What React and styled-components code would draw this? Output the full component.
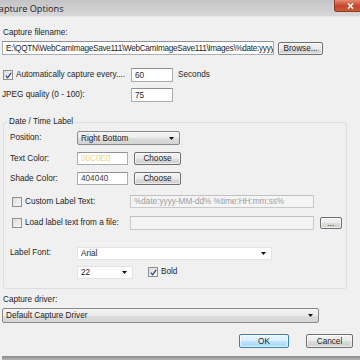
import React from 'react';
import styled, { createGlobalStyle } from 'styled-components';

const Global = createGlobalStyle`
  html, body { margin: 0; padding: 0; background: #f0f0f0; }
  body { font-family: "Liberation Sans", Arial, sans-serif; }
`;

const Window = styled.div`
  width: 360px;
  height: 360px;
  overflow: hidden;
  display: flex;
  flex-direction: column;
  background: #f0f0f0;
  color: #1e1e1e;
  font-size: 8.2px;
`;

const TitleBar = styled.div`
  height: 17px;
  flex: none;
  display: flex;
  justify-content: space-between;
  align-items: flex-start;
  background: linear-gradient(#c4c4c6, #d8d8d9);
  border-bottom: 1px solid #e6e6e6;
  box-sizing: border-box;
`;

const Title = styled.div`
  margin-left: -7px;
  margin-top: 2px;
  font-size: 9.2px;
  color: #222;
  font-family: "Open Sans", "Liberation Sans", sans-serif;
`;

const Close = styled.div`
  width: 26px;
  height: 12px;
  background: linear-gradient(#e48a74, #c84428 55%, #d05a3c);
  border: 1px solid #8c3a2a;
  border-top: none;
  border-right: none;
  border-radius: 0 0 0 3px;
  display: flex;
  align-items: center;
  justify-content: flex-end;
  padding-right: 6px;
  box-sizing: border-box;
`;

const Body = styled.div`
  flex: 1;
  display: flex;
  flex-direction: column;
  padding-left: 2px;
`;

const Label = styled.div`
  height: 10px;
  line-height: 10px;
  margin-top: ${(p) => p.$top || 0}px;
  margin-left: ${(p) => p.$left || 0}px;
  width: ${(p) => (p.$w ? `${p.$w}px` : 'auto')};
  flex: none;
  white-space: nowrap;
`;

const Row = styled.div`
  display: flex;
  align-items: center;
  height: ${(p) => p.$h || 14}px;
  margin-top: ${(p) => p.$top || 0}px;
  flex: none;
`;

const Field = styled.div`
  box-sizing: border-box;
  width: ${(p) => p.$w}px;
  height: ${(p) => p.$h || 14}px;
  margin-left: ${(p) => p.$left || 0}px;
  background: ${(p) => (p.$disabled ? '#f4f4f4' : '#fff')};
  border: 1px solid ${(p) => (p.$disabled ? '#c9c9c9' : '#abadb3')};
  border-top-color: ${(p) => (p.$disabled ? '#c0c0c0' : '#8e9196')};
  color: ${(p) => p.$color || '#1e1e1e'};
  letter-spacing: ${(p) => p.$tight ? '-0.3px' : 'normal'};
  padding-left: 3px;
  display: flex;
  align-items: center;
  white-space: nowrap;
  overflow: hidden;
  flex: none;
`;

const Button = styled.div`
  box-sizing: border-box;
  width: ${(p) => p.$w}px;
  height: ${(p) => p.$h || 13}px;
  margin-left: ${(p) => p.$left || 0}px;
  border: 1px solid ${(p) => (p.$primary ? '#3c7fb1' : '#707070')};
  border-radius: 2px;
  background: ${(p) =>
    p.$primary
      ? 'linear-gradient(#eaf6fd, #d9f0fc 50%, #bee6fd 51%, #a7d9f5)'
      : 'linear-gradient(#f2f2f2, #ebebeb 50%, #dddddd 51%, #cfcfcf)'};
  box-shadow: inset 0 0 0 1px rgba(255, 255, 255, 0.6);
  display: flex;
  align-items: center;
  justify-content: center;
  flex: none;
`;

const Combo = styled.div`
  box-sizing: border-box;
  width: ${(p) => p.$w}px;
  height: ${(p) => p.$h || 14}px;
  margin-left: ${(p) => p.$left || 0}px;
  border: 1px solid ${(p) => (p.$flat ? '#e3e3e3' : '#8a8a8a')};
  border-radius: ${(p) => (p.$flat ? 0 : 2)}px;
  background: ${(p) =>
    p.$flat ? '#fff' : 'linear-gradient(#f4f4f4, #ebebeb 50%, #dddddd 51%, #d4d4d4)'};
  display: flex;
  align-items: center;
  justify-content: space-between;
  padding: 0 5px 0 3px;
  flex: none;
`;

const Arrow = () => (
  <svg width="5" height="3" viewBox="0 0 5 3">
    <path d="M0 0h5L2.5 3z" fill="#111" />
  </svg>
);

const Check = styled.div`
  box-sizing: border-box;
  width: 10px;
  height: 10px;
  margin-left: ${(p) => p.$left || 0}px;
  margin-right: 3px;
  border: 1px solid #8e8f8f;
  background: linear-gradient(135deg, #dcdcdc, #f8f8f8);
  display: flex;
  align-items: center;
  justify-content: center;
  flex: none;
`;

const Tick = () => (
  <svg width="7" height="7" viewBox="0 0 7 7">
    <path d="M0.8 3.6l1.8 2.2L6.2 0.8" stroke="#2c4a86" strokeWidth="1.3" fill="none" />
  </svg>
);

const Group = styled.fieldset`
  margin: 15px 0 0 1px;
  padding: 0 0 10px 6px;
  width: 344px;
  box-sizing: border-box;
  border: 1px solid #d5dfe5;
  border-radius: 3px;
  flex: none;
  min-inline-size: 0;
`;

const Legend = styled.legend`
  margin-left: -3px;
  padding: 0 2px;
  height: 10px;
  line-height: 10px;
  font-size: 8.2px;
`;

const Buttons = styled.div`
  display: flex;
  justify-content: flex-end;
  gap: 17px;
  padding-right: 7px;
  margin-top: 11px;
  height: 14px;
  flex: none;
`;

const BottomEdge = styled.div`
  margin-top: auto;
  height: 4px;
  flex: none;
  background: linear-gradient(#8a8a8a, #b4b4b4);
`;

export default function App() {
  return (
    <>
      <Global />
      <Window>
        <TitleBar>
          <Title>Capture Options</Title>
          <Close>
            <svg width="7" height="6" viewBox="0 0 7 6">
              <path d="M1 0.5l5 5M6 0.5l-5 5" stroke="#fff" strokeWidth="1.6" />
            </svg>
          </Close>
        </TitleBar>
        <Body>
          <Label $top={11} $left={1}>Capture filename:</Label>
          <Row $top={3}>
            <Field $w={272} $tight>E:\QQTN\WebCamImageSave111\WebCamImageSave111\Images\%date:yyyy</Field>
            <Button $w={45} $left={4}>Browse...</Button>
          </Row>
          <Row $top={13}>
            <Check $left={1}><Tick /></Check>
            <Label $w={115}>Automatically capture every....</Label>
            <Field $w={42}>60</Field>
            <Label $left={5}>Seconds</Label>
          </Row>
          <Row $top={6}>
            <Label $w={129} $left={0}>JPEG quality (0 - 100):</Label>
            <Field $w={42}>75</Field>
          </Row>
          <Group>
            <Legend>Date / Time Label</Legend>
            <Row $top={4}>
              <Label $w={67}>Position:</Label>
              <Combo $w={103}>Right Bottom<Arrow /></Combo>
            </Row>
            <Row $top={7} $h={13}>
              <Label $w={67}>Text Color:</Label>
              <Field $w={51} $h={13} $color="#e6d68a">00C0E0</Field>
              <Button $w={47} $left={6}>Choose</Button>
            </Row>
            <Row $top={7} $h={13}>
              <Label $w={67}>Shade Color:</Label>
              <Field $w={51} $h={13} $color="#404040">404040</Field>
              <Button $w={47} $left={6}>Choose</Button>
            </Row>
            <Row $top={10} $h={13}>
              <Check $left={2} />
              <Label $w={105}>Custom Label Text:</Label>
              <Field $w={184} $h={13} $disabled $color="#9c9c9c">%date:yyyy-MM-dd% %time:HH:mm:ss%</Field>
            </Row>
            <Row $top={8}>
              <Check $left={2} />
              <Label $w={105}>Load label text from a file:</Label>
              <Field $w={184} $h={14} $disabled />
              <Button $w={22} $h={12} $left={6}>...</Button>
            </Row>
            <Row $top={17} $h={12}>
              <Label $w={67}>Label Font:</Label>
              <Combo $w={195} $h={13} $flat>Arial<Arrow /></Combo>
            </Row>
            <Row $top={7} $h={12}>
              <Label $w={67} />
              <Combo $w={56} $h={13} $flat>22<Arrow /></Combo>
              <Check $left={15}><Tick /></Check>
              <Label>Bold</Label>
            </Row>
          </Group>
          <Label $top={6} $left={1}>Capture driver:</Label>
          <Row $top={3} $h={15}>
            <Combo $w={317} $h={15}>Default Capture Driver<Arrow /></Combo>
          </Row>
          <Buttons>
            <Button $w={50} $h={14} $primary>OK</Button>
            <Button $w={47} $h={14}>Cancel</Button>
          </Buttons>
          <BottomEdge />
        </Body>
      </Window>
    </>
  );
}
